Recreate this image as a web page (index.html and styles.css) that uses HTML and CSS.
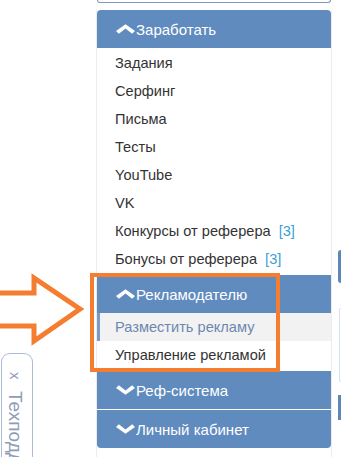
FILE: index.html
```html
<!DOCTYPE html>
<html lang="ru">
<head>
<meta charset="utf-8">
<title>Меню</title>
<link rel="stylesheet" href="styles.css">
</head>
<body>
<div class="page">
  <div class="left">
    <div class="tab"><span class="tab-x">x</span><span class="tab-text">Техподдержка</span></div>
  </div>
  <div class="panel">
    <div class="searchbox"></div>
    <div class="menu">
      <div class="head head-first"><svg class="chev" viewBox="0 0 20 10" width="19" height="10"><polygon points="0,7 10,0 20,7 17,10 10,4.5 3,10" fill="#fff"/></svg>Заработать</div>
      <ul class="list list-first">
        <li>Задания</li>
        <li>Серфинг</li>
        <li>Письма</li>
        <li>Тесты</li>
        <li>YouTube</li>
        <li>VK</li>
        <li>Конкурсы от реферера<span class="count">[3]</span></li>
        <li>Бонусы от реферера<span class="count">[3]</span></li>
      </ul>
      <div class="head"><svg class="chev" viewBox="0 0 20 10" width="19" height="10"><polygon points="0,7 10,0 20,7 17,10 10,4.5 3,10" fill="#fff"/></svg>Рекламодателю</div>
      <ul class="list">
        <li class="active">Разместить рекламу</li>
        <li>Управление рекламой</li>
      </ul>
      <div class="head"><svg class="chev" viewBox="0 0 20 10" width="19" height="10"><polygon points="0,3 3,0 10,5.5 17,0 20,3 10,10" fill="#fff"/></svg>Реф-система</div>
      <div class="head head-last"><svg class="chev" viewBox="0 0 20 10" width="19" height="10"><polygon points="0,3 3,0 10,5.5 17,0 20,3 10,10" fill="#fff"/></svg>Личный кабинет</div>
      <div class="menu-foot"></div>
    </div>
  </div>
  <div class="right">
    <div class="r-blue r-blue-1"></div>
    <div class="r-box"></div>
    <div class="r-blue r-blue-2"></div>
  </div>

  <svg class="arrow" viewBox="0 0 100 100" width="100" height="100">
    <polygon points="-5,28 34,28 34,13 80,44 34,76 34,61 -5,61" fill="none" stroke="#f47d30" stroke-width="5" stroke-linejoin="miter"/>
  </svg>
  <div class="highlight"></div>
</div>
</body>
</html>
```

FILE: styles.css
```css
html, body {
  margin: 0;
  padding: 0;
  background: #fff;
}
body {
  width: 341px;
  height: 457px;
  overflow: hidden;
  font-family: "Liberation Sans", Arial, sans-serif;
  font-size: 14.6px;
  color: #333;
}
.page {
  position: relative;
  display: flex;
  height: 457px;
}
.left {
  width: 96px;
  flex: none;
  display: flex;
  flex-direction: column;
  justify-content: flex-end;
}
.tab {
  margin-left: 1px;
  width: 32px;
  height: 110px;
  margin-bottom: -6px;
  border: 1px solid #aabcd6;
  border-bottom: none;
  border-radius: 9px 9px 0 0;
  writing-mode: vertical-rl;
  color: #8e9db6;
  font-size: 19px;
  display: flex;
  align-items: center;
  padding-top: 18px;
  box-sizing: border-box;
  padding-right: 4px;
}
.tab-x {
  margin-bottom: 11px;
  font-size: 15px;
}
.panel {
  width: 236px;
  flex: none;
}
.searchbox {
  margin: 0 1px 7px;
  height: 2px;
  border: 1px solid #8197b9;
  border-top: none;
  border-radius: 0 0 4px 4px;
}
.menu {
  border-left: 1px solid #ececec;
  border-right: 1px solid #ececec;
}
.head {
  height: 38px;
  display: flex;
  align-items: center;
  padding-left: 19px;
  background: #608bbe;
  color: #fff;
  font-size: 15px;
}
.head + .head {
  margin-top: 1px;
}
.head-first {
  border-radius: 4px 4px 0 0;
}
.head-last {
  border-radius: 0 0 4px 4px;
}
.chev {
  margin-right: 1px;
  margin-top: -1px;
  flex: none;
}
.list {
  list-style: none;
  margin: 0;
  padding: 0 0 2px;
}
.list-first {
  padding-top: 1px;
}
.list li {
  height: 28px;
  line-height: 28px;
  padding-left: 18px;
}
.list li.active {
  background: #f2f2f2;
  border-left: 3px solid #7b9ac5;
  padding-left: 15px;
  color: #6c88b0;
}
.count {
  margin-left: 8px;
  color: #3b9fd6;
}
.menu-foot {
  height: 12px;
}
.right {
  margin-left: 6px;
  flex: 1;
  display: flex;
  flex-direction: column;
}
.r-blue {
  background: #5f86bb;
  border-radius: 4px 0 0 4px;
}
.r-blue-1 {
  margin-top: 250px;
  height: 33px;
}
.r-box {
  margin-top: 25px;
  margin-left: 1px;
  height: 72px;
  border: 1px solid #d4e3f0;
  border-right: none;
  border-radius: 5px 0 0 5px;
}
.r-blue-2 {
  margin-top: 13px;
  height: 25px;
  border-radius: 0;
}
.arrow {
  position: absolute;
  left: 0;
  top: 265px;
  overflow: visible;
}
.highlight {
  position: absolute;
  left: 90px;
  top: 273px;
  width: 190px;
  height: 99px;
  box-sizing: border-box;
  border: 4px solid #f47d30;
}
```
